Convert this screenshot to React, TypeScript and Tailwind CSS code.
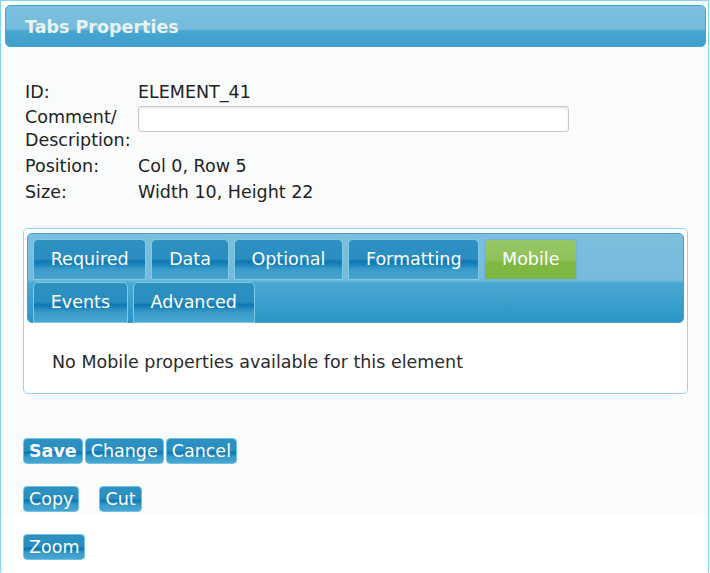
import React, { useState } from 'react';

const tabsRow1 = ['Required', 'Data', 'Optional', 'Formatting', 'Mobile'];
const tabsRow2 = ['Events', 'Advanced'];

const blueGloss =
  'bg-[linear-gradient(to_bottom,#2e91c2_0%,#2a8dc0_48%,#0b77b1_56%,#3a9bca_75%,#4aa6d0_100%)]';

const Tab = ({ label, active, onClick }) => (
  <button
    onClick={onClick}
    className={`h-[41px] px-[16.75px] rounded-t-[5px] border text-white leading-none ${
      active
        ? 'border-[#6fb3d6] bg-[linear-gradient(to_bottom,#98c766_0%,#8fc25a_50%,#80b843_58%,#7cb53f_100%)]'
        : `border-[#7ccbe9] ${blueGloss}`
    }`}
  >
    {label}
  </button>
);

const Btn = ({ children, bold = false }) => (
  <button
    className={`h-[26px] px-[5px] pt-[2px] flex items-center rounded-[4px] border border-[#6cc3e6] text-white leading-none ${blueGloss} ${
      bold ? 'font-bold' : ''
    }`}
  >
    {children}
  </button>
);

export default function App() {
  const [active, setActive] = useState('Mobile');
  const [comment, setComment] = useState('');

  return (
    <div className="w-[710px] h-[573px] overflow-hidden bg-white font-['DejaVu_Sans',Verdana,sans-serif] text-[17.5px] text-[#222]">
      <div className="w-[709px] h-[577px] border border-[#80d4f4] rounded-b-[7px] overflow-hidden">
        {/* header */}
        <div className="ml-[4px] mt-[4px] w-[701px] h-[42px] rounded-[5px] border border-[#4c9fcf] bg-[linear-gradient(to_bottom,#7cc0de_0%,#74bbdb_58%,#48a6d0_62%,#3e9fcb_100%)] flex items-center pl-[19px] pt-[2px]">
          <span className="font-bold text-[#e8f3f8]">Tabs Properties</span>
        </div>

        <div className="bg-[#fafcfc] pb-[4px]">
          {/* info */}
          <div className="pl-[24px] pt-[33px] flex flex-col gap-[2px] leading-[24px]">
            <div className="flex">
              <div className="w-[113px]">ID:</div>
              <div>ELEMENT_41</div>
            </div>
            <div className="flex">
              <div className="w-[113px] leading-[23px]">
                Comment/
                <br />
                Description:
              </div>
              <input
                value={comment}
                onChange={(e) => setComment(e.target.value)}
                className="w-[431px] h-[26px] bg-white border border-[#c9c9c9] rounded-[3px] shadow-[inset_0_1px_2px_rgba(0,0,0,0.12)] outline-none px-1"
              />
            </div>
            <div className="flex">
              <div className="w-[113px]">Position:</div>
              <div>Col 0, Row 5</div>
            </div>
            <div className="flex">
              <div className="w-[113px]">Size:</div>
              <div>Width 10, Height 22</div>
            </div>
          </div>

          {/* tabs box */}
          <div className="ml-[22px] mt-[24px] w-[665px] border border-[#8ed6f2] rounded-[5px] bg-white pt-[4px] px-[3px] pb-[19px]">
            <div className="h-[90px] rounded-[5px] border border-[#4a9fcf] bg-[linear-gradient(to_bottom,#7cbfdd_0%,#76bbdb_52%,#4aa8d2_56%,#2a96c6_100%)] pt-[5px] pl-[5px] flex flex-col gap-[2px]">
              <div className="flex gap-[5px]">
                {tabsRow1.map((t) => (
                  <Tab key={t} label={t} active={active === t} onClick={() => setActive(t)} />
                ))}
              </div>
              <div className="flex gap-[5px]">
                {tabsRow2.map((t) => (
                  <Tab key={t} label={t} active={active === t} onClick={() => setActive(t)} />
                ))}
              </div>
            </div>
            <div className="pl-[25px] pt-[27px] leading-[24px] text-[#2a2a2a]">
              No {active} properties available for this element
            </div>
          </div>

          {/* buttons */}
          <div className="pl-[22px] mt-[44px] flex flex-col gap-[22px]">
            <div className="flex gap-[2px]">
              <Btn bold>Save</Btn>
              <Btn>Change</Btn>
              <Btn>Cancel</Btn>
            </div>
            <div className="flex gap-[20px]">
              <Btn>Copy</Btn>
              <Btn>Cut</Btn>
            </div>
          </div>
        </div>

        <div className="pl-[22px] mt-[18px] flex">
          <Btn>Zoom</Btn>
        </div>
      </div>
    </div>
  );
}
